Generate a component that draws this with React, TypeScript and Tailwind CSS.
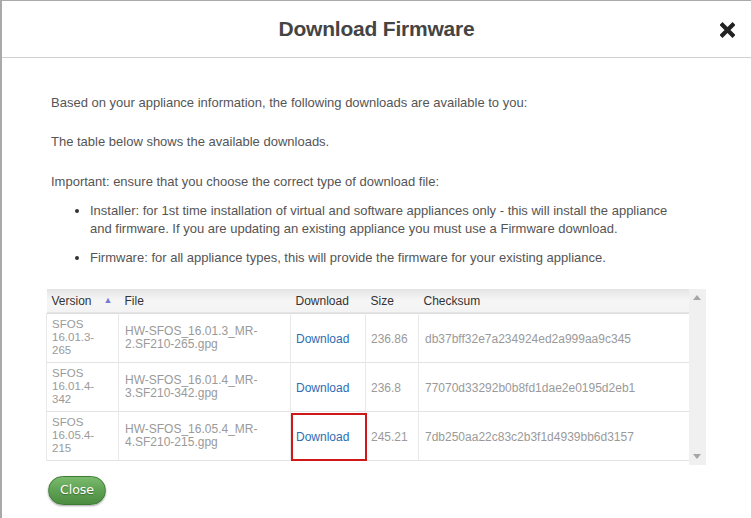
import React from "react";

type Row = {
  version: string[];
  file: string[];
  size: string;
  checksum: string;
  marked?: boolean;
};

const rows: Row[] = [
  {
    version: ["SFOS", "16.01.3-", "265"],
    file: ["HW-SFOS_16.01.3_MR-", "2.SF210-265.gpg"],
    size: "236.86",
    checksum: "db37bff32e7a234924ed2a999aa9c345",
  },
  {
    version: ["SFOS", "16.01.4-", "342"],
    file: ["HW-SFOS_16.01.4_MR-", "3.SF210-342.gpg"],
    size: "236.8",
    checksum: "77070d33292b0b8fd1dae2e0195d2eb1",
  },
  {
    version: ["SFOS", "16.05.4-", "215"],
    file: ["HW-SFOS_16.05.4_MR-", "4.SF210-215.gpg"],
    size: "245.21",
    checksum: "7db250aa22c83c2b3f1d4939bb6d3157",
    marked: true,
  },
];

const CloseIcon = () => (
  <svg width="15" height="16" viewBox="0 0 15 16">
    <path d="M2.5 3 L12.5 13 M12.5 3 L2.5 13" stroke="#222" strokeWidth="4.2" strokeLinecap="square" />
  </svg>
);

const App: React.FC = () => {
  return (
    <div
      className="w-[751px] h-[518px] bg-white border-l-2 border-t border-[#a9a9a9] overflow-hidden"
      style={{ fontFamily: '"Liberation Sans", Arial, sans-serif' }}
    >
      <div className="relative h-[57px] border-b border-[#cfcfcf] flex items-center justify-center">
        <h1 className="text-[21px] font-bold text-[#444] tracking-[-0.2px]">Download Firmware</h1>
        <button className="absolute right-[16px] top-[21px]">
          <CloseIcon />
        </button>
      </div>

      <div className="pl-[44px] pr-[45px] pt-[35px] text-[13px] text-[#555]">
        <p className="pl-[5px] leading-[20px] mb-[19px]">
          Based on your appliance information, the following downloads are available to you:
        </p>
        <p className="pl-[5px] leading-[20px] mb-[20px]">The table below shows the available downloads.</p>
        <p className="pl-[5px] leading-[20px] mb-[10px]">
          Important: ensure that you choose the correct type of download file:
        </p>
        <ul className="pl-[44px] mr-[22px] list-disc leading-[18px] marker:text-[#333]">
          <li className="mb-[11px]">
            Installer: for 1st time installation of virtual and software appliances only - this will install the appliance
            and firmware. If you are updating an existing appliance you must use a Firmware download.
          </li>
          <li>Firmware: for all appliance types, this will provide the firmware for your existing appliance.</li>
        </ul>

        <div className="mt-[22px] h-[176px] flex">
          <div className="flex-1">
            <table className="w-[642px] border-collapse table-fixed text-[12px]">
              <colgroup>
                <col className="w-[72px]" />
                <col className="w-[172px]" />
                <col className="w-[75px]" />
                <col className="w-[53px]" />
                <col className="w-[270px]" />
              </colgroup>
              <thead>
                <tr className="h-[24px] bg-gradient-to-b from-[#e4e4e4] via-[#f6f6f6] to-[#f3f3f3] text-[#333] border-b border-[#dcdcdc]">
                  <th className="font-normal text-left px-[5px]">
                    <div className="flex items-center justify-between">
                      <span>Version</span>
                      <span className="text-[9px] text-[#7a78d6] mr-[1px]">▲</span>
                    </div>
                  </th>
                  <th className="font-normal text-left px-[6px]">File</th>
                  <th className="font-normal text-left px-[5px]">Download</th>
                  <th className="font-normal text-left px-[5px]">Size</th>
                  <th className="font-normal text-left px-[5px]">Checksum</th>
                </tr>
              </thead>
              <tbody className="text-[#9a9a9a]">
                {rows.map(r => (
                  <tr key={r.checksum} className="h-[49px] border-b border-[#e3e3e3]">
                    <td className="border-l border-r border-[#e8e8e8] px-[5px] text-[11.5px] leading-[13px]">
                      {r.version.map(v => (
                        <span key={v} className="block">{v}</span>
                      ))}
                    </td>
                    <td className="border-r border-[#e8e8e8] px-[6px] leading-[13px]">
                      {r.file.map(f => (
                        <span key={f} className="block">{f}</span>
                      ))}
                    </td>
                    <td className="relative border-r border-[#e8e8e8] px-[5px] pt-[2px]">
                      <a className="text-[#2c6db4]">Download</a>
                      {r.marked && (
                        <span className="absolute left-0 top-[1px] w-[76px] h-[48px] border-2 border-[#d01818]" />
                      )}
                    </td>
                    <td className="border-r border-[#e8e8e8] px-[5px] pt-[2px]">{r.size}</td>
                    <td className="px-[6px] pt-[2px]">{r.checksum}</td>
                  </tr>
                ))}
              </tbody>
            </table>
          </div>
          <div className="w-[18px] bg-[#f0f0f0] flex flex-col justify-between items-center py-[6px]">
            <svg width="8" height="5" viewBox="0 0 8 5">
              <path d="M0 5 L4 0 L8 5 Z" fill="#a6a6a6" />
            </svg>
            <svg width="8" height="5" viewBox="0 0 8 5">
              <path d="M0 0 L4 5 L8 0 Z" fill="#a6a6a6" />
            </svg>
          </div>
        </div>

        <button
          className="mt-[11px] ml-[2px] w-[58px] h-[29px] rounded-full border border-[#3f7a37] bg-gradient-to-b from-[#7bbb6e] via-[#5fa153] to-[#4c8c42] text-white text-[12.5px] shadow-[0_1px_2px_rgba(0,0,0,0.35)] [text-shadow:0_1px_1px_rgba(0,0,0,0.3)]"
          style={{ fontFamily: '"DejaVu Sans", Verdana, sans-serif' }}
        >
          Close
        </button>
      </div>
    </div>
  );
};

export default App;
